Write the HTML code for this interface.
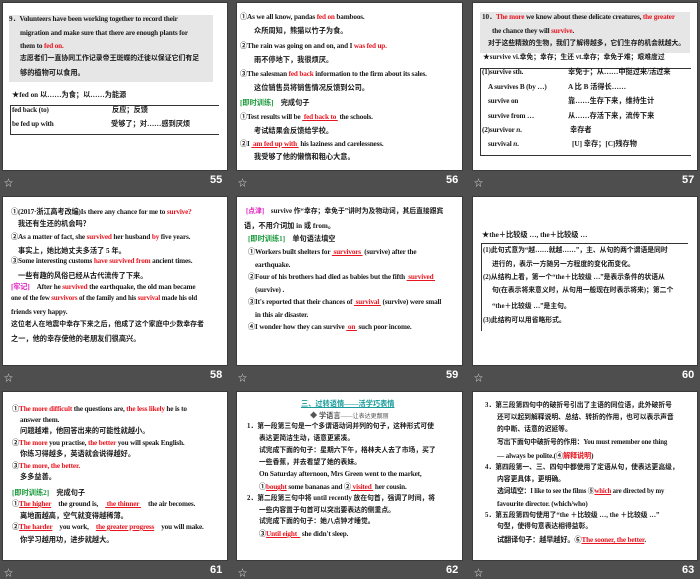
<!DOCTYPE html>
<html><head><meta charset="utf-8"><style>
body{margin:0;width:700px;height:577px;background:#4e4e4e;position:relative;overflow:hidden;font-family:"Liberation Serif","Noto Sans CJK SC",sans-serif}
.s{position:absolute;background:#fff;width:224px;height:167px;box-shadow:0 0 0 1px #3a3a3a}
.l{position:absolute;white-space:nowrap;font-size:7.2px;line-height:12px;font-weight:bold;color:#1a1a1a}
.e{letter-spacing:-0.15px}
.r{color:#e8141e}.g{color:#1a9a3a}.m{color:#e020c0}.t{color:#169a9a}
.u{text-decoration:underline;color:#e8141e}
.n{position:absolute;color:#fff;font:bold 11px "Liberation Sans",sans-serif}
.st{position:absolute;color:#ddd;font-size:9px}
.box{position:absolute;border:1px solid #333;border-right:none}
.gb{position:absolute;background:#e6e6e6}
</style></head><body>
<div class="s" style="left:3px;top:3px"></div>
<div class="s" style="left:237px;top:3px;width:225px"></div>
<div class="s" style="left:473px;top:3px"></div>
<div class="s" style="left:3px;top:197px;height:168px"></div>
<div class="s" style="left:237px;top:197px;width:225px;height:168px"></div>
<div class="s" style="left:473px;top:197px;height:168px"></div>
<div class="s" style="left:3px;top:392px;height:168px"></div>
<div class="s" style="left:237px;top:392px;width:225px;height:168px"></div>
<div class="s" style="left:473px;top:392px;height:168px"></div>
<div class="st" style="left:4px;top:176px">☆</div><div class="n" style="left:210px;top:174px">55</div>
<div class="st" style="left:238px;top:176px">☆</div><div class="n" style="left:446px;top:174px">56</div>
<div class="st" style="left:474px;top:176px">☆</div><div class="n" style="left:682px;top:174px">57</div>
<div class="st" style="left:4px;top:371px">☆</div><div class="n" style="left:210px;top:369px">58</div>
<div class="st" style="left:238px;top:371px">☆</div><div class="n" style="left:446px;top:369px">59</div>
<div class="st" style="left:474px;top:371px">☆</div><div class="n" style="left:682px;top:369px">60</div>
<div class="st" style="left:4px;top:566px">☆</div><div class="n" style="left:210px;top:564px">61</div>
<div class="st" style="left:238px;top:566px">☆</div><div class="n" style="left:446px;top:564px">62</div>
<div class="st" style="left:474px;top:566px">☆</div><div class="n" style="left:682px;top:564px">63</div>

<!-- 55 -->
<div class="gb" style="left:9px;top:15px;width:204px;height:67px"></div>
<div class="l e" style="left:9px;top:13px">9．Volunteers have been working together to record their</div>
<div class="l e" style="left:20px;top:27px">migration and make sure that there are enough plants for</div>
<div class="l e" style="left:20px;top:40px">them to <span class="r">fed on.</span></div>
<div class="l" style="left:20px;top:53px;font-size:6.9px">志愿者们一直协同工作记录帝王斑蝶的迁徙以保证它们有足</div>
<div class="l" style="left:20px;top:67px">够的植物可以食用。</div>
<div class="l" style="left:12px;top:89px">★fed on 以……为食；以……为能源</div>
<div class="box" style="left:10px;top:105px;width:208px;height:28px"></div>
<div class="l e" style="left:12px;top:104px">fed back (to)</div><div class="l" style="left:112px;top:104px">反应；反馈</div>
<div class="l e" style="left:12px;top:118px">be fed up with</div><div class="l" style="left:111px;top:118px">受够了；对……感到厌烦</div>

<!-- 56 -->
<div class="l e" style="left:240px;top:11px">①As we all know, pandas <span class="r">fed on</span> bamboos.</div>
<div class="l" style="left:254px;top:25px">众所周知，熊猫以竹子为食。</div>
<div class="l e" style="left:240px;top:40px">②The rain was going on and on, and I <span class="r">was fed up.</span></div>
<div class="l" style="left:254px;top:54px">雨不停地下，我很烦厌。</div>
<div class="l e" style="left:240px;top:68px">③The salesman <span class="r">fed back</span> information to the firm about its sales.</div>
<div class="l" style="left:254px;top:82px">这位销售员将销售情况反馈到公司。</div>
<div class="l" style="left:240px;top:97px"><span class="g">[即时训练]</span>　完成句子</div>
<div class="l e" style="left:240px;top:111px">①Test results will be <span class="u">&nbsp;fed back to&nbsp;</span> the schools.</div>
<div class="l" style="left:254px;top:125px">考试结果会反馈给学校。</div>
<div class="l e" style="left:240px;top:138px">②I <span class="u">&nbsp;am fed up with&nbsp;</span> his laziness and carelessness.</div>
<div class="l" style="left:254px;top:151px">我受够了他的懒惰和粗心大意。</div>

<!-- 57 -->
<div class="gb" style="left:480px;top:12px;width:210px;height:41px"></div>
<div class="l e" style="left:482px;top:11px">10．<span class="r">The more</span> we know about these delicate creatures, <span class="r">the greater</span></div>
<div class="l e" style="left:492px;top:25px">the chance they will <span class="r">survive</span>.</div>
<div class="l" style="left:488px;top:38px;font-size:6.8px">对于这些精致的生物，我们了解得越多，它们生存的机会就越大。</div>
<div class="l" style="left:483px;top:52px;font-size:6.8px">★survive vi.幸免；幸存；生还 vt.幸存；幸免于难；艰难度过</div>
<div class="box" style="left:480px;top:68px;width:210px;height:86px"></div>
<div class="l e" style="left:482px;top:66px">(1)survive sth.</div><div class="l" style="left:568px;top:66px">幸免于；从……中挺过来/活过来</div>
<div class="l e" style="left:488px;top:81px">A survives B (by …)</div><div class="l" style="left:568px;top:81px">A 比 B 活得长……</div>
<div class="l e" style="left:488px;top:95px">survive on</div><div class="l" style="left:568px;top:95px">靠……生存下来，维持生计</div>
<div class="l e" style="left:488px;top:110px">survive from …</div><div class="l" style="left:568px;top:110px">从……存活下来，流传下来</div>
<div class="l e" style="left:482px;top:124px">(2)survivor <i>n</i>.</div><div class="l" style="left:570px;top:124px">幸存者</div>
<div class="l e" style="left:488px;top:138px">survival <i>n</i>.</div><div class="l" style="left:572px;top:138px">[U] 幸存；[C]残存物</div>

<!-- 58 -->
<div class="l e" style="left:11px;top:206px">①(2017·浙江高考改编)Is there any chance for me to <span class="r">survive?</span></div>
<div class="l" style="left:18px;top:218px">我还有生还的机会吗？</div>
<div class="l e" style="left:11px;top:231px">②As a matter of fact, she <span class="r">survived</span> her husband <span class="r">by</span> five years.</div>
<div class="l" style="left:18px;top:245px">事实上，她比她丈夫多活了 5 年。</div>
<div class="l e" style="left:11px;top:255px">③Some interesting customs <span class="r">have survived from</span> ancient times.</div>
<div class="l" style="left:18px;top:270px">一些有趣的风俗已经从古代流传了下来。</div>
<div class="l e" style="left:11px;top:281px"><span class="m">[牢记]</span>　After he <span class="r">survived</span> the earthquake, the old man became</div>
<div class="l e" style="left:11px;top:293px;font-size:6.9px">one of the few <span class="r">survivors</span> of the family and his <span class="r">survival</span> made his old</div>
<div class="l e" style="left:11px;top:306px">friends very happy.</div>
<div class="l" style="left:11px;top:319px;font-size:6.9px">这位老人在地震中幸存下来之后，他成了这个家庭中少数幸存者</div>
<div class="l" style="left:11px;top:333px">之一，他的幸存使他的老朋友们很高兴。</div>

<!-- 59 -->
<div class="l" style="left:246px;top:206px;font-size:6.8px"><span class="m">[点津]</span>　survive 作“幸存；幸免于”讲时为及物动词，其后直接跟宾</div>
<div class="l" style="left:244px;top:220px">语，不用介词加 in 或 from。</div>
<div class="l" style="left:248px;top:233px"><span class="g">[即时训练1]</span>　单句语法填空</div>
<div class="l e" style="left:248px;top:246px">①Workers built shelters for <span class="u">&nbsp;survivors&nbsp;</span> (survive) after the</div>
<div class="l e" style="left:255px;top:259px">earthquake.</div>
<div class="l e" style="left:248px;top:271px">②Four of his brothers had died as babies but the fifth <span class="u">&nbsp;survived&nbsp;</span></div>
<div class="l e" style="left:255px;top:284px">(survive) .</div>
<div class="l e" style="left:248px;top:296px">③It's reported that their chances of <span class="u">&nbsp;survival&nbsp;</span> (survive) were small</div>
<div class="l e" style="left:255px;top:309px">in this air disaster.</div>
<div class="l e" style="left:248px;top:321px">④I wonder how they can survive <span class="u">&nbsp;on&nbsp;</span> such poor income.</div>

<!-- 60 -->
<div class="l" style="left:482px;top:229px">★the＋比较级 …, the＋比较级 …</div>
<div class="box" style="left:481px;top:243px;width:206px;height:87px;border-bottom:none;border-top:1px solid #333"></div>
<div class="l" style="left:483px;top:245px;font-size:6.8px">(1)此句式意为“越……就越……”，主、从句的两个谓语是同时</div>
<div class="l" style="left:492px;top:259px;font-size:6.8px">进行的，表示一方随另一方程度的变化而变化。</div>
<div class="l" style="left:483px;top:272px;font-size:6.8px">(2)从结构上看，第一个“the＋比较级 …”是表示条件的状语从</div>
<div class="l" style="left:492px;top:285px;font-size:6.8px">句(在表示将来意义时，从句用一般现在时表示将来)；第二个</div>
<div class="l" style="left:492px;top:301px;font-size:6.8px">“the＋比较级 …”是主句。</div>
<div class="l" style="left:483px;top:315px;font-size:6.8px">(3)此结构可以用省略形式。</div>

<!-- 61 -->
<div class="l e" style="left:12px;top:403px">①<span class="r">The more difficult</span> the questions are, <span class="r">the less likely</span> he is to</div>
<div class="l e" style="left:20px;top:414px">answer them.</div>
<div class="l" style="left:20px;top:425px">问题越难，他回答出来的可能性就越小。</div>
<div class="l e" style="left:12px;top:437px">②<span class="r">The more</span> you practise, <span class="r">the better</span> you will speak English.</div>
<div class="l" style="left:20px;top:448px">你练习得越多，英语就会说得越好。</div>
<div class="l e" style="left:12px;top:460px">③<span class="r">The more, the better.</span></div>
<div class="l" style="left:20px;top:471px">多多益善。</div>
<div class="l" style="left:12px;top:487px"><span class="g">[即时训练2]</span>　完成句子</div>
<div class="l e" style="left:12px;top:498px">①<span class="u">The higher</span>　the ground is,　<span class="u">&nbsp;the thinner&nbsp;</span>　the air becomes.</div>
<div class="l" style="left:20px;top:510px">离地面越高，空气就变得越稀薄。</div>
<div class="l e" style="left:12px;top:521px">②<span class="u">The harder</span>　you work,　<span class="u">the greater progress</span>　you will make.</div>
<div class="l" style="left:20px;top:534px">你学习越用功，进步就越大。</div>

<!-- 62 -->
<div class="l t" style="left:301px;top:398px;text-decoration:underline">三、过转语情——活学巧表情</div>
<div class="l" style="left:310px;top:410px;color:#555">◆ 学语言<span style="font-size:6px;font-weight:normal">——让表达更靓丽</span></div>
<div class="l" style="left:247px;top:421px;font-size:6.8px">1．第一段第三句是一个多谓语动词并列的句子，这种形式可使</div>
<div class="l" style="left:259px;top:433px;font-size:6.8px">表达更简洁生动，语意更紧凑。</div>
<div class="l" style="left:259px;top:445px;font-size:6.8px">试完成下面的句子：星期六下午，格林夫人去了市场，买了</div>
<div class="l" style="left:259px;top:457px;font-size:6.8px">一些香蕉，并去看望了她的表妹。</div>
<div class="l e" style="left:259px;top:468px">On Saturday afternoon, Mrs Green went to the market,</div>
<div class="l e" style="left:259px;top:481px">①<span class="u">bought</span> some bananas and ②<span class="u">&nbsp;visited&nbsp;</span> her cousin.</div>
<div class="l" style="left:247px;top:493px;font-size:6.8px">2．第二段第三句中将 until recently 放在句首，强调了时间，将</div>
<div class="l" style="left:259px;top:505px;font-size:6.8px">一些内容置于句首可以突出要表达的侧重点。</div>
<div class="l" style="left:259px;top:516px;font-size:6.8px">试完成下面的句子：她八点钟才睡觉。</div>
<div class="l e" style="left:259px;top:528px">③<span class="u">Until eight&nbsp;&nbsp;</span> she didn't sleep.</div>

<!-- 63 -->
<div class="l" style="left:485px;top:400px;font-size:6.8px">3．第三段第四句中的破折号引出了主语的同位语，此外破折号</div>
<div class="l" style="left:497px;top:412px;font-size:6.8px">还可以起到解释说明、总结、转折的作用，也可以表示声音</div>
<div class="l" style="left:497px;top:424px;font-size:6.8px">的中断、话意的迟延等。</div>
<div class="l e" style="left:497px;top:437px;font-size:6.8px">写出下面句中破折号的作用：You must remember one thing</div>
<div class="l e" style="left:497px;top:450px">— always be polite.(④<span class="r">解释说明</span>)</div>
<div class="l" style="left:485px;top:462px;font-size:6.8px">4．第四段第一、三、四句中都使用了定语从句，使表达更高级，</div>
<div class="l" style="left:497px;top:474px;font-size:6.8px">内容更具体，更明确。</div>
<div class="l e" style="left:497px;top:486px;font-size:6.8px">选词填空：I like to see the films ⑤<span class="u">which</span> are directed by my</div>
<div class="l e" style="left:497px;top:498px">favourite director. (which/who)</div>
<div class="l" style="left:485px;top:510px;font-size:6.8px">5．第五段第四句使用了“the ＋比较级 …, the ＋比较级 …”</div>
<div class="l" style="left:497px;top:521px;font-size:6.8px">句型，使得句意表达相得益彰。</div>
<div class="l e" style="left:497px;top:534px">试翻译句子：越早越好。⑥<span class="u">The sooner, the better</span>.</div>
</body></html>
